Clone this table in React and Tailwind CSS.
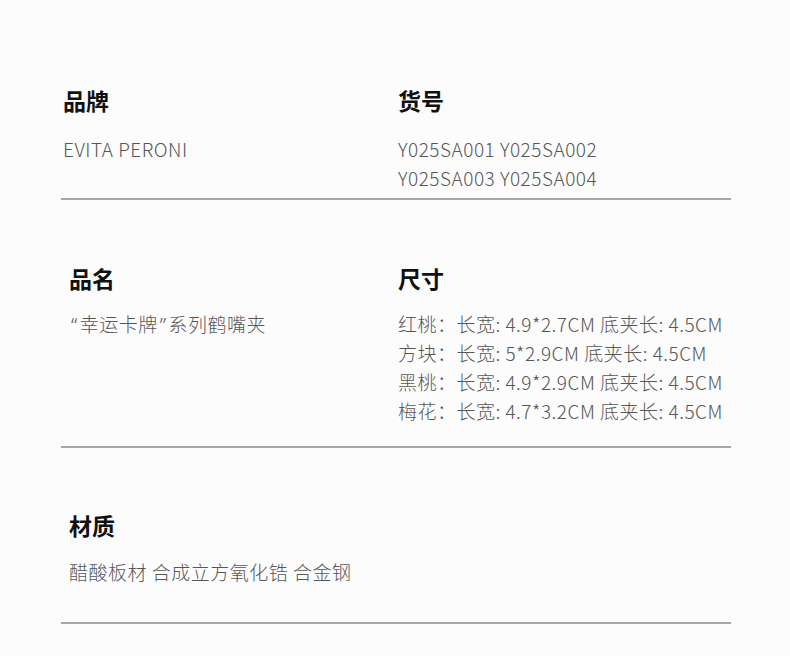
import React from "react";

const specs = [
    "红桃：长宽: 4.9*2.7CM 底夹长: 4.5CM",
    "方块：长宽: 5*2.9CM 底夹长: 4.5CM",
    "黑桃：长宽: 4.9*2.9CM 底夹长: 4.5CM",
    "梅花：长宽: 4.7*3.2CM 底夹长: 4.5CM",
];

function Heading({ children }) {
    return <h3 className="text-[23px] leading-[32px] font-bold text-[#111]">{children}</h3>;
}

function Body({ lines }) {
    return (
        <div className="text-[19px] leading-[29px] tracking-[0.5px] font-light text-[#575757]">
            {lines.map((l, i) => (
                <p key={i} className="whitespace-nowrap">{l}</p>
            ))}
        </div>
    );
}

// narrow latin quotes, like the original
const Q = ({ children }) => <span className="font-['Noto_Sans',sans-serif] text-[20px] px-[2px]">{children}</span>;

export default function App() {
    return (
        <div className="w-[790px] h-[656px] bg-[#fcfcfc] font-['Noto_Sans_CJK_SC','Noto_Sans',sans-serif]">
            <div className="ml-[61px] w-[670px]">
                {/* brand + sku */}
                <div className="pt-[84px] pb-[6px] border-b-2 border-[#a6a6a6] flex">
                    <div className="w-[337px] pl-[2px]">
                        <Heading>品牌</Heading>
                        <div className="mt-[18px]">
                            <Body lines={["EVITA PERONI"]} />
                        </div>
                    </div>
                    <div>
                        <Heading>货号</Heading>
                        <div className="mt-[18px]">
                            <Body lines={["Y025SA001 Y025SA002", "Y025SA003 Y025SA004"]} />
                        </div>
                    </div>
                </div>

                {/* name + size */}
                <div className="pt-[62px] pb-[21px] border-b-2 border-[#a6a6a6] flex">
                    <div className="w-[337px] pl-[8px]">
                        <Heading>品名</Heading>
                        <div className="mt-[15px]">
                            <Body lines={[<><Q>“</Q>幸运卡牌<Q>”</Q>系列鹤嘴夹</>]} />
                        </div>
                    </div>
                    <div>
                        <Heading>尺寸</Heading>
                        <div className="mt-[15px]">
                            <Body lines={specs} />
                        </div>
                    </div>
                </div>

                {/* material */}
                <div className="pt-[61px] pb-[36px] border-b-2 border-[#a6a6a6] pl-[8px]">
                    <Heading>材质</Heading>
                    <div className="mt-[16px]">
                        <Body lines={["醋酸板材 合成立方氧化锆 合金钢"]} />
                    </div>
                </div>
            </div>
        </div>
    );
}
